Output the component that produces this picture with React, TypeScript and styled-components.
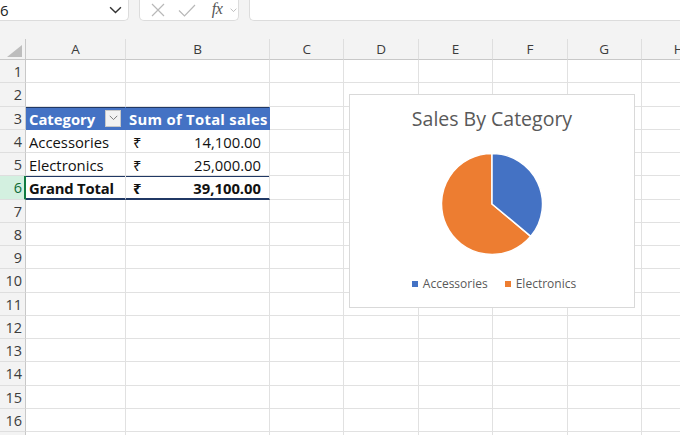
import React from "react";
import styled, { createGlobalStyle } from "styled-components";

const GlobalStyle = createGlobalStyle`
  html, body { margin: 0; padding: 0; background: #ffffff; }
  body { font-family: "Open Sans", "Noto Sans", sans-serif; overflow: hidden; }
  * { box-sizing: border-box; }
`;

const Page = styled.div`
  width: 680px;
  height: 435px;
  overflow: hidden;
  background: #f3f3f3;
`;

const TopBar = styled.div`
  height: 39px;
  display: flex;
  align-items: flex-start;
  gap: 10px;
  background: #f3f3f3;
`;

const Box = styled.div<{ $w?: number; $grow?: boolean }>`
  height: 21px;
  background: #ffffff;
  border: 1px solid #dcdcdc;
  border-top: none;
  border-radius: 0 0 5px 5px;
  display: flex;
  align-items: center;
  ${(p) => (p.$w ? `width: ${p.$w}px; flex: none;` : "")}
  ${(p) => (p.$grow ? "flex: 1; border-right: none; border-radius: 0 0 0 5px;" : "")}
`;

const NameBox = styled(Box)`
  border-left: none;
  border-radius: 0 0 5px 0;
  justify-content: space-between;
  padding: 0 6px 0 0;
  font-size: 15px;
  color: #222;
`;

const FxBox = styled(Box)`
  padding: 0 0 0 8px;
`;

const IconSlot = styled.span<{ $w: number }>`
  width: ${(p) => p.$w}px;
  display: flex;
  align-items: center;
  justify-content: center;
  color: #b4b4b4;
`;

const FxText = styled.span`
  font-family: "Liberation Serif", "DejaVu Serif", serif;
  font-style: italic;
  font-size: 16px;
  color: #555;
  letter-spacing: -0.5px;
  line-height: 1;
  margin-top: -2px;
`;

const SheetWrap = styled.div`
  position: relative;
  height: 396px;
  overflow: hidden;
`;

const Grid = styled.div`
  display: grid;
  grid-template-columns: 26px 100px 144px repeat(6, 74.4px);
  grid-template-rows: 21px repeat(17, 23.25px);
  background: #ffffff;
`;

const ColHead = styled.div<{ $first?: boolean }>`
  background: #f3f3f3;
  border-bottom: 1px solid #c8c8c8;
  border-right: 1px solid ${(p) => (p.$first ? "#c8c8c8" : "#dedede")};
  display: flex;
  align-items: center;
  justify-content: center;
  font-size: 13.5px;
  color: #3c3c3c;
  position: relative;
`;

const CornerTri = styled.div`
  position: absolute;
  right: 3px;
  bottom: 2px;
  width: 0;
  height: 0;
  border-left: 15px solid transparent;
  border-bottom: 12px solid #bdbdbd;
`;

const RowHead = styled.div<{ $sel?: boolean }>`
  background: ${(p) => (p.$sel ? "#d3f0e0" : "#f3f3f3")};
  border-bottom: 1px solid #dedede;
  border-right: ${(p) => (p.$sel ? "2px solid #107c41" : "1px solid #c8c8c8")};
  display: flex;
  align-items: center;
  justify-content: flex-end;
  padding: 1px ${(p) => (p.$sel ? "2px" : "3px")} 0 0;
  font-size: 14.5px;
  color: ${(p) => (p.$sel ? "#0e6b37" : "#3c3c3c")};
`;

type Kind = "plain" | "head" | "body" | "total";

const Cell = styled.div<{ $kind: Kind; $pad?: boolean }>`
  border-right: 1px solid #e1e1e1;
  border-bottom: 1px solid #e1e1e1;
  display: flex;
  align-items: center;
  font-size: 14.8px;
  color: #111;
  white-space: nowrap;
  padding: 2px ${(p) => (p.$pad ? "8px" : "3px")} 0 3px;
  position: relative;
  ${(p) =>
    p.$kind === "head" &&
    `background: #4472c4; color: #ffffff; font-weight: 700; border-right-color: #4472c4; border-bottom-color: #4472c4; box-shadow: inset 0 1px 0 #203864;`}
  ${(p) =>
    p.$kind === "total" &&
    `font-weight: 700; border-bottom: 2px solid #203864; box-shadow: inset 0 1px 0 #203864;`}
`;

const HeadText = styled.span<{ $spread?: boolean }>`
  letter-spacing: ${(p) => (p.$spread ? "0.3px" : "-0.2px")};
`;

const Currency = styled.span`
  flex: none;
  width: 20px;
  padding-left: 4px;
`;

const Amount = styled.span`
  flex: 1;
  text-align: right;
`;

const FilterBtn = styled.span`
  position: absolute;
  right: 4px;
  top: 3px;
  width: 16px;
  height: 17px;
  background: #f2f2f2;
  border: 1px solid #c8c8c8;
  display: flex;
  align-items: center;
  justify-content: center;
`;

const Chart = styled.div`
  position: absolute;
  left: 349px;
  top: 55px;
  width: 286px;
  height: 214px;
  background: #ffffff;
  border: 1px solid #d9d9d9;
  display: flex;
  flex-direction: column;
  align-items: center;
  padding-top: 11px;
`;

const ChartTitle = styled.div`
  font-size: 19.5px;
  line-height: 26px;
  color: #595959;
`;

const PieSvg = styled.svg`
  margin-top: 20px;
  display: block;
`;

const Legend = styled.div`
  margin-top: 20px;
  display: flex;
  align-items: center;
  gap: 17px;
  font-size: 12px;
  line-height: 16px;
  color: #595959;
  padding-left: 4px;
`;

const LegendItem = styled.div`
  display: flex;
  align-items: center;
  gap: 5px;
`;

const Swatch = styled.span<{ $c: string }>`
  width: 6px;
  height: 6px;
  background: ${(p) => p.$c};
`;

const cols = ["A", "B", "C", "D", "E", "F", "G", "H"];

const Chevron = ({ size = 12, color = "#444" }: { size?: number; color?: string }) => (
  <svg width={size} height={size * 0.6} viewBox="0 0 12 7" fill="none">
    <path d="M1 1l5 5 5-5" stroke={color} strokeWidth="1.3" />
  </svg>
);

function piePath(cx: number, cy: number, r: number, a0: number, a1: number) {
  const rad = (a: number) => ((a - 90) * Math.PI) / 180;
  const x0 = cx + r * Math.cos(rad(a0));
  const y0 = cy + r * Math.sin(rad(a0));
  const x1 = cx + r * Math.cos(rad(a1));
  const y1 = cy + r * Math.sin(rad(a1));
  const large = a1 - a0 > 180 ? 1 : 0;
  return `M${cx} ${cy} L${x0.toFixed(2)} ${y0.toFixed(2)} A${r} ${r} 0 ${large} 1 ${x1.toFixed(2)} ${y1.toFixed(2)} Z`;
}

const pivot: Record<number, { kind: Kind; a: string; cur?: string; amt?: string }> = {
  3: { kind: "head", a: "Category" },
  4: { kind: "body", a: "Accessories", cur: "₹", amt: "14,100.00" },
  5: { kind: "body", a: "Electronics", cur: "₹", amt: "25,000.00" },
  6: { kind: "total", a: "Grand Total", cur: "₹", amt: "39,100.00" },
};

export default function App() {
  const acc = 14100;
  const total = 39100;
  const split = (acc / total) * 360;
  const rows = Array.from({ length: 17 }, (_, i) => i + 1);

  return (
    <Page>
      <GlobalStyle />
      <TopBar>
        <NameBox $w={129}>
          <span>6</span>
          <Chevron size={13} color="#333" />
        </NameBox>
        <FxBox $w={100}>
          <IconSlot $w={20}>
            <svg width="14" height="14" viewBox="0 0 14 14">
              <path d="M1 1l12 12M13 1L1 13" stroke="#b8b8b8" strokeWidth="1.2" />
            </svg>
          </IconSlot>
          <IconSlot $w={38}>
            <svg width="18" height="13" viewBox="0 0 18 13">
              <path d="M1 6.5l5.5 5.5L17 1" stroke="#b8b8b8" strokeWidth="1.2" fill="none" />
            </svg>
          </IconSlot>
          <IconSlot $w={22}>
            <FxText>fx</FxText>
          </IconSlot>
          <IconSlot $w={10}>
            <Chevron size={7} color="#aaa" />
          </IconSlot>
        </FxBox>
        <Box $grow />
      </TopBar>
      <SheetWrap>
        <Grid>
          <ColHead $first>
            <CornerTri />
          </ColHead>
          {cols.map((c) => (
            <ColHead key={c}>{c}</ColHead>
          ))}
          {rows.map((r) => {
            const p = pivot[r];
            return (
              <React.Fragment key={r}>
                <RowHead $sel={r === 6}>{r <= 16 ? r : ""}</RowHead>
                {p ? (
                  <>
                    <Cell $kind={p.kind}>
                      {p.kind === "total" ? <HeadText>{p.a}</HeadText> : p.a}
                      {p.kind === "head" && (
                        <FilterBtn>
                          <Chevron size={9} color="#777" />
                        </FilterBtn>
                      )}
                    </Cell>
                    <Cell $kind={p.kind} $pad>
                      {p.kind === "head" ? (
                        <HeadText $spread>Sum of Total sales</HeadText>
                      ) : (
                        <>
                          <Currency>{p.cur}</Currency>
                          <Amount>{p.amt}</Amount>
                        </>
                      )}
                    </Cell>
                  </>
                ) : (
                  <>
                    <Cell $kind="plain" />
                    <Cell $kind="plain" />
                  </>
                )}
                {cols.slice(2).map((c) => (
                  <Cell key={c} $kind="plain" />
                ))}
              </React.Fragment>
            );
          })}
        </Grid>
        <Chart>
          <ChartTitle>Sales By Category</ChartTitle>
          <PieSvg width="104" height="104" viewBox="0 0 104 104">
            <path d={piePath(52, 52, 50.5, split, 360)} fill="#ed7d31" stroke="#ffffff" strokeWidth="1.5" />
            <path d={piePath(52, 52, 50.5, 0, split)} fill="#4472c4" stroke="#ffffff" strokeWidth="1.5" />
          </PieSvg>
          <Legend>
            <LegendItem>
              <Swatch $c="#4472c4" />
              Accessories
            </LegendItem>
            <LegendItem>
              <Swatch $c="#ed7d31" />
              Electronics
            </LegendItem>
          </Legend>
        </Chart>
      </SheetWrap>
    </Page>
  );
}
